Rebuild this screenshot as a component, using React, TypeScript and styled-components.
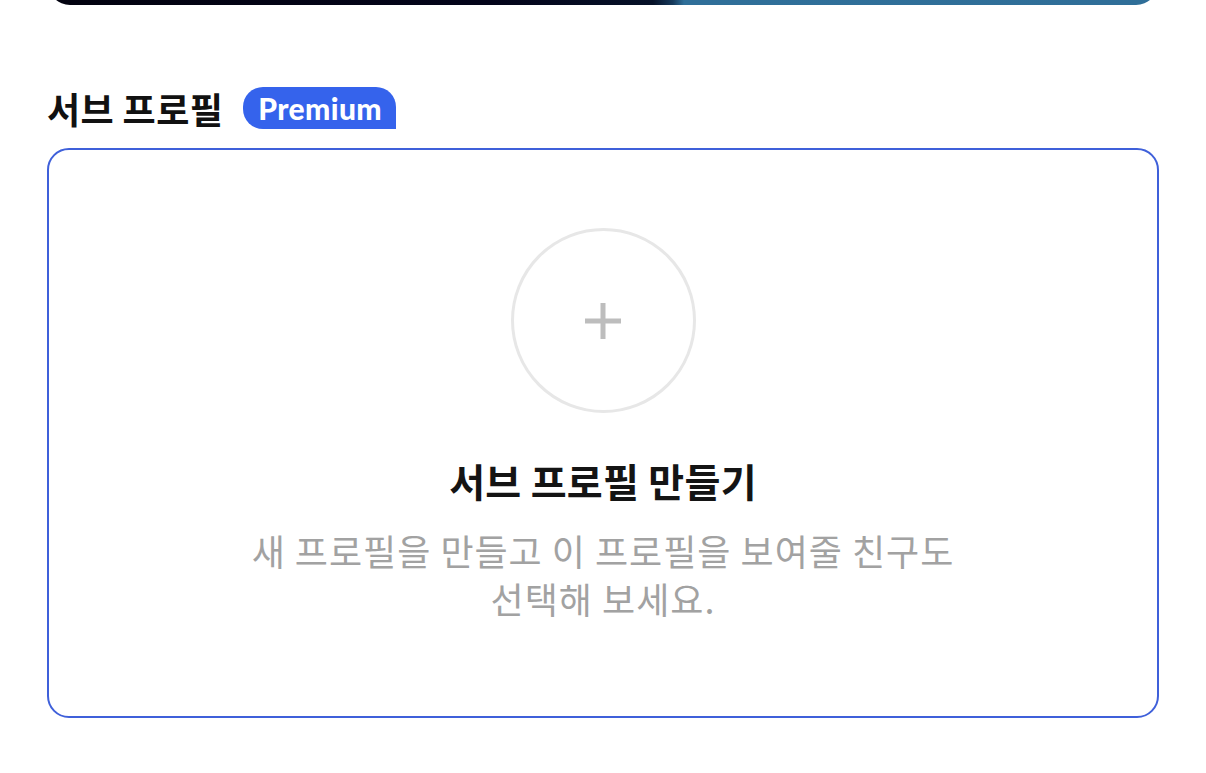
import React from "react";
import styled, { createGlobalStyle } from "styled-components";

const GlobalStyle = createGlobalStyle`
  html, body {
    margin: 0;
    padding: 0;
    background: #ffffff;
  }
  body {
    font-family: "Noto Sans CJK KR", "Noto Sans", sans-serif;
    -webkit-font-smoothing: antialiased;
  }
`;

const Page = styled.div`
  width: 1206px;
  height: 773px;
  box-sizing: border-box;
  padding: 0 47px;
  display: flex;
  flex-direction: column;
  overflow: hidden;
`;

const BannerClip = styled.div`
  height: 5px;
  overflow: hidden;
  display: flex;
  flex-direction: column;
  justify-content: flex-end;
  padding: 0 1px;
`;

const BannerImage = styled.div`
  flex-shrink: 0;
  height: 44px;
  border-radius: 22px;
  background: linear-gradient(
    90deg,
    #02020f 0%,
    #03041a 40%,
    #061128 54.5%,
    #163a5c 56.3%,
    #2f6f99 57.3%,
    #2f6e98 100%
  );
`;

const SectionHeader = styled.div`
  display: flex;
  align-items: center;
  gap: 20px;
  margin-top: 82px;
  height: 42px;
`;

const SectionTitle = styled.h2`
  margin: 0;
  font-size: 36px;
  font-weight: 700;
  color: #111111;
  letter-spacing: 0.4px;
  line-height: 1;
`;

const PremiumBadge = styled.span`
  display: inline-flex;
  align-items: center;
  justify-content: center;
  height: 42px;
  padding: 0 14px 0 15px;
  box-sizing: border-box;
  background: #3563ec;
  color: #ffffff;
  border-radius: 20px 20px 0 20px;
  font-family: "Lato", "Noto Sans", sans-serif;
  font-weight: 900;
  font-size: 30px;
  letter-spacing: 0.4px;
  line-height: 1;
`;

const Card = styled.section`
  margin-top: 19px;
  height: 570px;
  box-sizing: border-box;
  border: 2.5px solid #3f60da;
  border-radius: 22px;
  display: flex;
  flex-direction: column;
  align-items: center;
  padding-top: 78px;
`;

const AddCircle = styled.button`
  width: 185px;
  height: 185px;
  border-radius: 50%;
  border: 3px solid #e7e7e7;
  background: #ffffff;
  display: flex;
  align-items: center;
  justify-content: center;
  padding: 0;
  cursor: pointer;
`;

const CardTitle = styled.h3`
  margin: 43px 0 0;
  font-size: 39px;
  font-weight: 700;
  color: #141414;
  line-height: 48px;
  letter-spacing: 0.3px;
`;

const CardText = styled.p`
  margin: 22px 0 0;
  font-size: 36px;
  font-weight: 400;
  color: #a2a2a2;
  line-height: 48px;
  text-align: center;
  letter-spacing: 1px;
`;

const PlusIcon = () => (
  <svg width="36" height="36" viewBox="0 0 36 36" aria-hidden="true">
    <rect x="15.5" y="0" width="5" height="36" fill="#bdbdbd" />
    <rect x="0" y="15.5" width="36" height="5" fill="#bdbdbd" />
  </svg>
);

export default function App() {
  return (
    <>
      <GlobalStyle />
      <Page>
        <BannerClip>
          <BannerImage />
        </BannerClip>
        <SectionHeader>
          <SectionTitle>서브 프로필</SectionTitle>
          <PremiumBadge>Premium</PremiumBadge>
        </SectionHeader>
        <Card>
          <AddCircle aria-label="서브 프로필 만들기">
            <PlusIcon />
          </AddCircle>
          <CardTitle>서브 프로필 만들기</CardTitle>
          <CardText>
            새 프로필을 만들고 이 프로필을 보여줄 친구도
            <br />
            선택해 보세요.
          </CardText>
        </Card>
      </Page>
    </>
  );
}
